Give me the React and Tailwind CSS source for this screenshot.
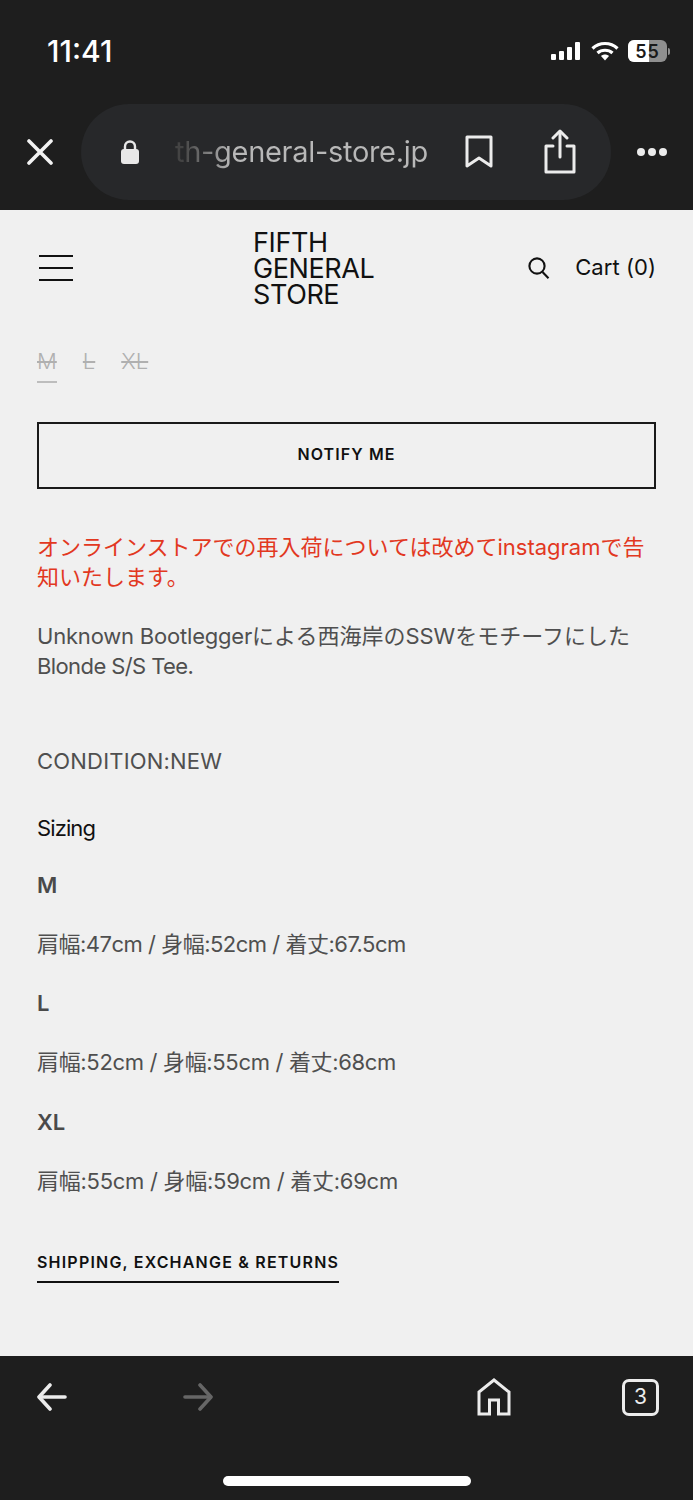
import React from "react";

const ja = { fontFamily: '"Inter","Noto Sans CJK JP",sans-serif' };

function Signal() {
  return (
    <svg width="32" height="20" viewBox="0 0 32 20" fill="#fff">
      <rect x="1" y="13" width="5" height="6" rx="1" />
      <rect x="9" y="10" width="5" height="9" rx="1" />
      <rect x="17" y="6" width="5" height="13" rx="1" />
      <rect x="25" y="1" width="5" height="18" rx="1" />
    </svg>
  );
}

function Wifi() {
  return (
    <svg width="28" height="20" viewBox="0 0 28 20" fill="none" stroke="#fff" strokeWidth="3.2">
      <path d="M1.5 7.5C8.5 .8 19.5 .8 26.5 7.5" />
      <path d="M6.5 12C10.5 8.3 17.5 8.3 21.5 12" />
      <path d="M14 19.5l-4-4.4c2.3-2 5.7-2 8 0z" fill="#fff" stroke="none" />
    </svg>
  );
}

function Battery() {
  return (
    <div className="flex items-center gap-[1px]">
      <div className="relative w-[39px] h-[22px] rounded-[6px] overflow-hidden flex bg-[#8f8f8f]">
        <div className="w-[21px] bg-white" />
        <span className="absolute inset-0 flex items-center justify-center text-[#1a1a1a] text-[18px] font-semibold tracking-[1px]" style={ja}>55</span>
      </div>
      <div className="w-[2px] h-[7px] rounded-r bg-[#8f8f8f]" />
    </div>
  );
}

function Close() {
  return (
    <svg width="26" height="26" viewBox="0 0 26 26" fill="none" stroke="#f2f2f2" strokeWidth="3.6" strokeLinecap="round">
      <path d="M2 2l22 22M24 2L2 24" />
    </svg>
  );
}

function Lock() {
  return (
    <svg width="20" height="26" viewBox="0 0 20 26">
      <path d="M5 11V7.5a5 5 0 0 1 10 0V11" fill="none" stroke="#e8e8e8" strokeWidth="2.4" />
      <rect x="1" y="10" width="18" height="15" rx="3" fill="#e8e8e8" />
    </svg>
  );
}

function Bookmark() {
  return (
    <svg width="28" height="34" viewBox="0 0 28 34" fill="none" stroke="#ececec" strokeWidth="3">
      <path d="M2 2h24v29L14 23 2 31z" strokeLinejoin="round" />
    </svg>
  );
}

function Share() {
  return (
    <svg width="34" height="46" viewBox="0 0 34 46" fill="none" stroke="#ececec" strokeWidth="3" strokeLinecap="round" strokeLinejoin="round">
      <path d="M10 17H3v26h28V17h-7" />
      <path d="M17 28V3" />
      <path d="M10 9l7-7 7 7" />
    </svg>
  );
}

function Hamburger() {
  return (
    <div className="ml-[2px] w-[34px] flex flex-col gap-[10px]">
      <div className="h-[2px] bg-[#111]" />
      <div className="h-[2px] bg-[#111]" />
      <div className="h-[2px] bg-[#111]" />
    </div>
  );
}

function SearchIcon() {
  return (
    <svg width="22" height="22" viewBox="0 0 22 22" fill="none" stroke="#111" strokeWidth="2.1">
      <circle cx="9" cy="9" r="7.6" />
      <path d="M14.5 15l6 6.2" />
    </svg>
  );
}

function Arrow({ color, flip }) {
  return (
    <svg width="30" height="30" viewBox="0 0 30 30" fill="none" stroke={color} strokeWidth="3.6" strokeLinecap="round" strokeLinejoin="round" className={flip ? "-scale-x-100" : ""}>
      <path d="M28 15H3" />
      <path d="M13 3L2 15l11 12" />
    </svg>
  );
}

function Home() {
  return (
    <svg width="34" height="38" viewBox="0 0 34 38" fill="none" stroke="#ececec" strokeWidth="3">
      <path d="M2 36V14L17 2l15 12v22H21.500V22H12.500v14z" />
    </svg>
  );
}

function Size({ children, selected }) {
  return (
    <div className="flex flex-col">
      <span className="text-[22px] leading-[24px] font-light text-[#b0b0b0] line-through">{children}</span>
      <div className={"h-[2px] mt-[8px] " + (selected ? "bg-[#bdbdbd]" : "bg-transparent")} />
    </div>
  );
}

function Body({ children, className = "", spacing = "tracking-[-0.5px]" }) {
  return <p className={"text-[22px] leading-[30px] text-[#4f4f4f] " + spacing + " " + className}>{children}</p>;
}

function Head({ children, className = "" }) {
  return <p className={"text-[22px] leading-[30px] font-semibold text-[#4a4a4a] " + className}>{children}</p>;
}

export default function App() {
  return (
    <div className="w-[693px] h-[1500px] flex flex-col bg-[#f0f0f0] overflow-hidden" style={ja}>
      <div className="h-[210px] bg-[#1e1e1e] shrink-0 flex flex-col">
        <div className="h-[104px] pt-[33px] pl-[47px] pr-[23px] flex justify-between items-start">
          <span className="text-white text-[30px] leading-[36px] font-medium">11:41</span>
          <div className="flex items-center gap-[9px] h-[36px]">
            <Signal />
            <Wifi />
            <Battery />
          </div>
        </div>
        <div className="flex items-center pl-[27px] pr-[26px]">
          <Close />
          <div className="ml-[28px] w-[530px] h-[96px] rounded-[48px] bg-[#27282a] flex items-center pl-[39px]">
            <Lock />
            <span className="ml-[35px] w-[254px] text-[29px] leading-[36px] tracking-[-0.3px] whitespace-nowrap bg-gradient-to-r from-[#444] from-[3%] to-[#b8b8b8] to-[22%] bg-clip-text text-transparent">th-general-store.jp</span>
            <div className="ml-[36px]"><Bookmark /></div>
            <div className="ml-[50px]"><Share /></div>
          </div>
          <div className="ml-auto flex gap-[3px]">
            <div className="w-[8px] h-[8px] rounded-full bg-[#ececec]" />
            <div className="w-[8px] h-[8px] rounded-full bg-[#ececec]" />
            <div className="w-[8px] h-[8px] rounded-full bg-[#ececec]" />
          </div>
        </div>
      </div>

      <div className="flex-1 px-[37px] pt-[19px]">
        <div className="flex items-center h-[78px]">
          <Hamburger />
          <div className="ml-[180px] pt-[2px] text-[27px] leading-[26px] text-[#111] tracking-[-0.4px]">
            <div>FIFTH</div>
            <div>GENERAL</div>
            <div>STORE</div>
          </div>
          <div className="ml-auto flex items-center gap-[25px]">
            <SearchIcon />
            <span className="text-[22px] leading-[28px] text-[#111] tracking-[0.05px] -mt-[3px]">Cart (0)</span>
          </div>
        </div>

        <div className="flex gap-[26px] mt-[42px]">
          <Size selected>M</Size>
          <Size>L</Size>
          <Size>XL</Size>
        </div>

        <button className="mt-[39px] w-full h-[67px] pb-[4px] border-2 border-[#1a1a1a] text-[16px] font-semibold tracking-[1.1px] text-[#111]">NOTIFY ME</button>

        <p className="mt-[43px] text-[22px] leading-[30px] text-[#e2381f]">オンラインストアでの再入荷については改めてinstagramで告知いたします。</p>
        <Body className="mt-[29px]" spacing="tracking-[0px]">
          <span className="tracking-[-0.2px]">Unknown Bootlegger</span>による西海岸のSSWをモチーフにした<span className="tracking-[-0.6px]">Blonde S/S Tee.</span>
        </Body>
        <Body className="mt-[65px]" spacing="tracking-[0.2px]">CONDITION:NEW</Body>
        <p className="mt-[37px] text-[22px] leading-[30px] text-[#111] tracking-[-0.9px]">Sizing</p>
        <Head className="mt-[27px]">M</Head>
        <Body className="mt-[29px]">肩幅:47cm / 身幅:52cm / 着丈:67.5cm</Body>
        <Head className="mt-[29px]">L</Head>
        <Body className="mt-[29px]" spacing="tracking-[-0.33px]">肩幅:52cm / 身幅:55cm / 着丈:68cm</Body>
        <Head className="mt-[30px]">XL</Head>
        <Body className="mt-[29px]" spacing="tracking-[-0.27px]">肩幅:55cm / 身幅:59cm / 着丈:69cm</Body>
        <div className="mt-[54px] inline-block border-b-2 border-[#111] pb-[7px] text-[16px] leading-[24px] font-semibold tracking-[1.2px] text-[#111]">SHIPPING, EXCHANGE &amp; RETURNS</div>
      </div>

      <div className="h-[144px] shrink-0 bg-[#1e1e1e] flex flex-col">
        <div className="flex items-center pl-[37px] pr-[34px] pt-[22px]">
          <Arrow color="#ececec" />
          <div className="ml-[116px]"><Arrow color="#666666" flip /></div>
          <div className="ml-[264px]"><Home /></div>
          <div className="ml-auto w-[37px] h-[37px] rounded-[7px] border-[3px] border-[#ececec] flex items-center justify-center text-[21px] text-[#ececec]">3</div>
        </div>
        <div className="mt-auto mb-[14px] mx-auto w-[248px] h-[10px] rounded-full bg-white" />
      </div>
    </div>
  );
}
